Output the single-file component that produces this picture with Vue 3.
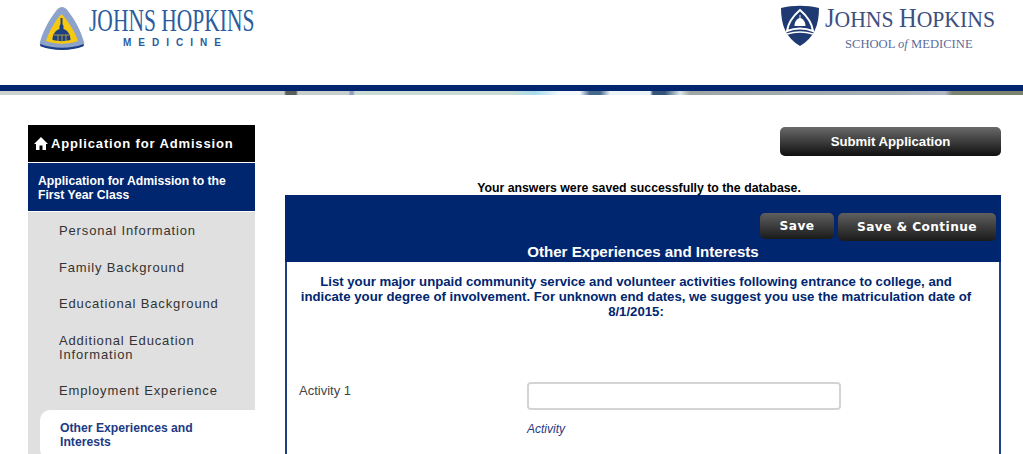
<template>
  <div class="page">
    <header class="top">
      <div class="brand brand-left">
        <svg class="crest" width="46" height="44" viewBox="0 0 46 44">
          <path d="M23 1 C25 1 27 2 29 5 C36 14 42 25 45 36 C45.500 38 45 39 44 40 C32 45 14 45 2 40 C1 39 .5 38 1 36 C4 25 10 14 17 5 C19 2 21 1 23 1 Z" fill="#8ea3cb" />
          <path d="M22.500 8 C30 16 36 26 39 35 C29 38.500 17 38.500 7 35 C10 26 15 16 22.500 8 Z" fill="#f6c80f" />
          <path d="M1.500 38 C14 43 32 43 44.500 38 C45 39 45 40 44 40.500 C32 45 14 45 2 40.500 C1 40 1 39 1.500 38 Z" fill="#1d3f85" />
          <path d="M21.500 12 h2 v6 l1 2 v3 c5 2 7 6 7 11 c-6 1.500 -12 1.500 -18 0 c0 -5 2 -9 7 -11 v-3 l1 -2 Z" fill="#1e3f7f" />
          <path d="M15 29 h15 M19 29 v6 M23 29 v6 M27 29 v6" stroke="#c9b13a" stroke-width=".8" fill="none" />
        </svg>
        <div class="wordmark word-left">
          <div class="jh-left">JOHNS HOPKINS</div>
          <div class="jh-med">MEDICINE</div>
        </div>
      </div>
      <div class="brand brand-right">
        <svg class="crest" width="38" height="42" viewBox="0 0 38 42">
          <path d="M0 3 C12 0 26 0 38 3 C38 20 33 33 19 41 C5 33 0 20 0 3 Z" fill="#1f3a72" />
          <path d="M19 5 C26 11 31 19 32 26 C24 23 14 23 6 26 C7 19 12 11 19 5 Z" fill="none" stroke="#fff" stroke-width="2" />
          <path d="M18.500 10 h1 v3 c3 1 5 4 5 8 h-11 c0 -4 2 -7 5 -8 Z" fill="#fff" />
          <path d="M6 29 C14 26.500 24 26.500 32 29" fill="none" stroke="#fff" stroke-width="1.500" />
        </svg>
        <div class="wordmark word-right">
          <div class="jh-right">J<span class="sc">OHNS </span>H<span class="sc">OPKINS</span></div>
          <div class="jh-school">SCHOOL <i>of</i> MEDICINE</div>
        </div>
      </div>
    </header>
    <div class="rule"></div>
    <div class="strip"></div>

    <div class="layout">
      <aside class="side">
        <div class="side-title">
          <svg width="14" height="13" viewBox="0 0 14 13">
            <path d="M7 0 L14 7 H12 V13 H8.500 V8.500 H5.500 V13 H2 V7 H0 Z" fill="#fff" />
          </svg>
          <span>Application for Admission</span>
        </div>
        <div class="side-section">Application for Admission to the First Year Class</div>
        <ul class="side-menu">
          <li v-for="item in menu" :key="item" class="side-item">{{ item }}</li>
          <li class="side-item active">Other Experiences and Interests</li>
        </ul>
      </aside>

      <main class="content">
        <div class="submit-row">
          <button class="btn submit">Submit Application</button>
        </div>
        <p class="saved">Your answers were saved successfully to the database.</p>
        <section class="panel">
          <div class="panel-head">
            <div class="panel-actions">
              <button class="btn save">Save</button>
              <button class="btn save-next">Save &amp; Continue</button>
            </div>
            <h2>Other Experiences and Interests</h2>
          </div>
          <div class="panel-body">
            <p class="intro">
              List your major unpaid community service and volunteer activities following entrance to college, and
              indicate your degree of involvement. For unknown end dates, we suggest you use the matriculation date of
              8/1/2015:
            </p>
            <div class="field">
              <label>Activity 1</label>
              <div class="field-input">
                <input type="text" />
                <em>Activity</em>
              </div>
            </div>
          </div>
        </section>
      </main>
    </div>
  </div>
</template>

<script setup>
const menu = [
  'Personal Information',
  'Family Background',
  'Educational Background',
  'Additional Education Information',
  'Employment Experience',
]
</script>

<style>
html, body {
  margin: 0;
  overflow: hidden;
  background: #fff;
}
</style>

<style scoped>
.page {
  height: 454px;
  overflow: hidden;
  font-family: "Liberation Sans", Arial, sans-serif;
  color: #000;
}

.top {
  height: 85px;
  display: flex;
  justify-content: space-between;
  align-items: flex-start;
  padding: 5px 27px 0 39px;
  box-sizing: border-box;
}
.brand {
  display: flex;
  align-items: flex-start;
}
.brand-left .crest { margin-top: 1px; margin-right: 4px; }
.brand-right .crest { margin-right: 1px; }
.wordmark {
  font-family: "Liberation Serif", serif;
  white-space: pre;
}
.word-left { width: 170px; }
.word-right { width: 176px; }
.jh-left {
  margin-top: -1px;
  font-size: 32px;
  line-height: 32px;
  color: #2a5d9e;
  transform: scaleX(.672);
  transform-origin: 0 0;
}
.jh-med {
  margin: 2px 0 0 34px;
  font-family: "Liberation Sans", sans-serif;
  font-size: 10px;
  line-height: 10px;
  font-weight: 700;
  letter-spacing: 7px;
  color: #2a5d9e;
}
.jh-right {
  margin-left: 5px;
  font-size: 27px;
  line-height: 27px;
  color: #3d4f80;
  transform: scaleX(.904);
  transform-origin: 0 0;
}
.jh-right .sc { font-size: 24px; }
.jh-school {
  margin: 4px 0 0 25px;
  font-size: 12.600px;
  line-height: 14px;
  color: #5c6c99;
}

.rule {
  height: 6px;
  background: #012670;
}
.strip {
  height: 4px;
  background: linear-gradient(90deg,
    #cdd2cf 0, #cdd2cf 284px, #5a5f5c 286px, #5a5f5c 296px, #c8cecb 298px, #c8cecb 349px, #8d9dbb 350px, #8d9dbb 353px,
    #cbdcd5 355px, #cbdcd5 510px, #a7dcec 535px, #f4f8fa 560px, #f4f8fa 580px, #44678a 590px, #44678a 600px, #eef3f5 610px,
    #eef3f5 650px, #355578 653px, #355578 665px, #dfe8ea 680px, #9fa6a4 690px, #a9b0b4 900px, #b3b8c4 945px, #7b8370 952px, #7b8370 100%);
}

.layout {
  display: flex;
  padding: 30px 22px 0 28px;
  gap: 30px;
}

.side {
  width: 227px;
  flex: none;
}
.side-title {
  height: 37px;
  background: #000;
  color: #fff;
  display: flex;
  align-items: center;
  gap: 3px;
  padding-left: 6px;
  font-size: 13px;
  font-weight: 700;
  letter-spacing: .85px;
  box-sizing: border-box;
  margin-bottom: 1px;
}
.side-section {
  background: #012670;
  color: #fff;
  font-size: 12.200px;
  font-weight: 700;
  line-height: 14px;
  padding: 11px 20px 9px 10px;
  height: 48px;
  box-sizing: border-box;
  margin-bottom: 1px;
}
.side-menu {
  list-style: none;
  margin: 0;
  padding: 0;
  background: #e0e0e0;
}
.side-item {
  padding: 12px 30px 10.500px 31px;
  font-size: 13px;
  line-height: 14px;
  letter-spacing: .85px;
  color: #333;
}
.side-item.active {
  margin: 1.500px 0 0 12px;
  padding: 11px 40px 10px 20px;
  background: #fff;
  border-radius: 10px 0 0 10px;
  color: #1c3a85;
  font-size: 12.200px;
  font-weight: 700;
  letter-spacing: 0;
}

.content {
  flex: 1;
  min-width: 0;
}
.submit-row {
  display: flex;
  justify-content: flex-end;
  padding-top: 2px;
}
.btn {
  border: 0;
  color: #fff;
  font-family: "Liberation Sans", Arial, sans-serif;
  font-weight: 700;
  background: linear-gradient(#6a6a6a, #0f0f0f);
  border-radius: 5px;
  padding: 0;
}
.submit {
  width: 221px;
  height: 29px;
  font-size: 13.200px;
  padding-bottom: 1px;
}
.saved {
  margin: 25px 8px 0 0;
  height: 15px;
  line-height: 15px;
  text-align: center;
  font-size: 12.300px;
  font-weight: 700;
}
.panel {
  margin-top: -1px;
  border: 2px solid #1f3f88;
  border-top: 0;
  border-bottom: 0;
  height: 300px;
}
.panel-head {
  margin: 0 -2px;
  height: 67px;
  background: #012670;
  box-sizing: border-box;
  padding-top: 18px;
}
.panel-actions {
  display: flex;
  justify-content: flex-end;
  gap: 4px;
  padding-right: 5px;
  align-items: flex-start;
}
.save, .save-next {
  font-family: "DejaVu Sans", sans-serif;
  font-size: 12.200px;
  letter-spacing: .4px;
  background: linear-gradient(#5f5f5f, #1a1a1a);
}
.save { width: 74px; height: 26px; }
.save-next { width: 158px; height: 28px; }
.panel-head h2 {
  margin: 1px 0 0;
  color: #fff;
  text-align: center;
  font-size: 15.100px;
  line-height: 20px;
  font-weight: 700;
}
.panel-body {
  padding: 12px 26px 0 12px;
}
.intro {
  margin: 0;
  color: #012670;
  font-size: 13.200px;
  font-weight: 700;
  line-height: 15px;
  text-align: center;
}
.field {
  display: flex;
  margin-top: 63px;
}
.field label {
  width: 228px;
  flex: none;
  font-size: 13px;
  line-height: 16px;
  color: #444;
  padding-top: 1px;
}
.field-input {
  display: flex;
  flex-direction: column;
}
.field-input input {
  width: 314px;
  height: 28px;
  box-sizing: border-box;
  border: 2px solid #d4d4d4;
  border-radius: 4px;
  background: #fff;
  margin-bottom: 12px;
}
.field-input em {
  font-size: 12px;
  line-height: 14px;
  color: #1f3a85;
}
</style>
